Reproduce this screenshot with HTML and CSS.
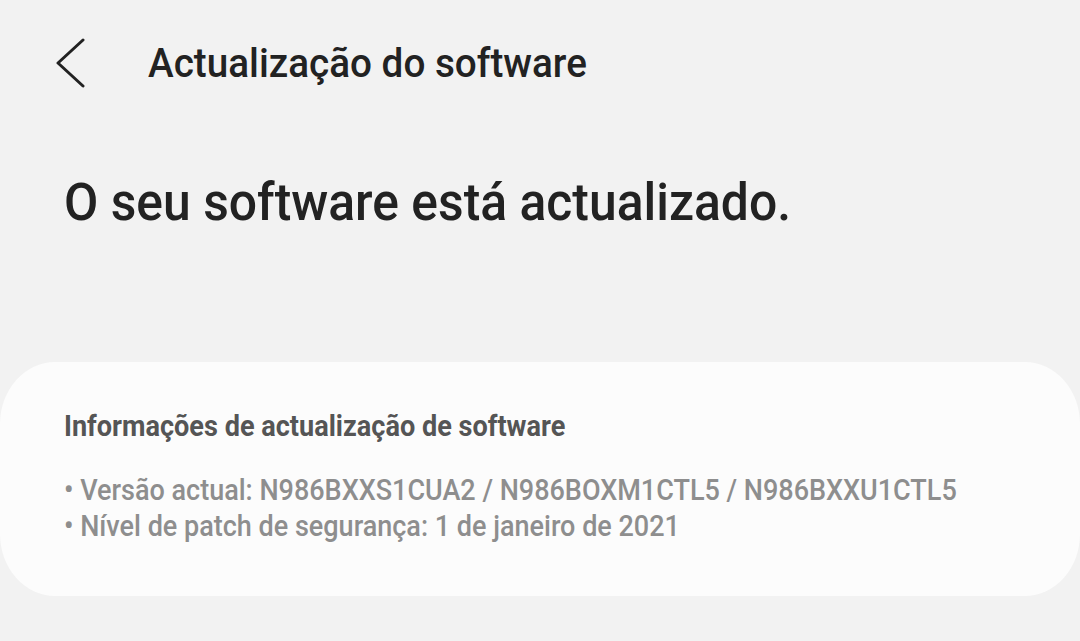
FILE: index.html
```html
<!DOCTYPE html>
<html lang="pt">
<head>
<meta charset="utf-8">
<title>Actualização do software</title>
<link rel="stylesheet" href="styles.css">
</head>
<body>
<div class="screen">
  <header class="appbar">
    <button class="back" aria-label="Voltar">
      <svg width="30" height="50" viewBox="0 0 30 50"><polyline points="27,2 2,25 27,48" fill="none" stroke="#222" stroke-width="3" stroke-linecap="round" stroke-linejoin="round"/></svg>
    </button>
    <h1 class="appbar-title">Actualização do software</h1>
  </header>
  <main class="content">
    <h2 class="status">O seu software está actualizado.</h2>
    <section class="card">
      <h3 class="card-title">Informações de actualização de software</h3>
      <ul class="info-list">
        <li>Versão actual: N986BXXS1CUA2 / N986BOXM1CTL5 / N986BXXU1CTL5</li>
        <li>Nível de patch de segurança: 1 de janeiro de 2021</li>
      </ul>
    </section>
  </main>
</div>
</body>
</html>
```
FILE: styles.css
```css
html, body {
  margin: 0;
  padding: 0;
  background: #f2f2f2;
}
body {
  font-family: Roboto, "Liberation Sans", sans-serif;
  color: #232323;
}
.screen {
  width: 1080px;
  height: 641px;
  overflow: hidden;
  display: flex;
  flex-direction: column;
}
.appbar {
  height: 126px;
  display: flex;
  align-items: center;
  padding-left: 56px;
  box-sizing: border-box;
}
.back {
  border: 0;
  background: none;
  padding: 0;
  width: 30px;
  height: 50px;
  display: flex;
  margin-right: 62px;
}
.appbar-title {
  margin: 0;
  font-size: 41px;
  font-weight: 500;
  color: #222;
  white-space: nowrap;
  transform: scaleX(0.943);
  transform-origin: left center;
}
.content {
  display: flex;
  flex-direction: column;
}
.status {
  margin: 47px 0 0 64px;
  font-size: 51px;
  line-height: 60px;
  font-weight: 500;
  color: #222;
  white-space: nowrap;
  transform: scaleX(0.977);
  transform-origin: left center;
}
.card {
  margin-top: 129px;
  height: 234px;
  background: #fcfcfc;
  border-radius: 55px / 62px;
  padding: 46px 64px 0;
  box-sizing: border-box;
}
.card-title {
  margin: 0;
  font-size: 29px;
  line-height: 36px;
  font-weight: 700;
  color: #555;
  white-space: nowrap;
  transform: scaleX(0.934);
  transform-origin: left center;
}
.info-list {
  list-style: none;
  margin: 28px 0 0;
  padding: 0;
  font-size: 30px;
  line-height: 36px;
  font-weight: 500;
  color: #8e8e8e;
}
.info-list li {
  white-space: nowrap;
  transform: scaleX(0.90);
  transform-origin: left center;
}
.info-list li::before {
  content: "• ";
}
```
